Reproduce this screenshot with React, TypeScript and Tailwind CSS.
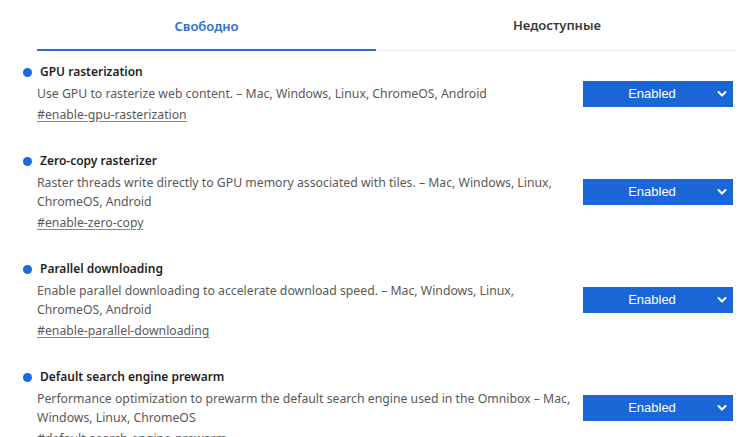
import React from 'react';

const flags = [
  {
    title: 'GPU rasterization',
    description: 'Use GPU to rasterize web content. – Mac, Windows, Linux, ChromeOS, Android',
    link: '#enable-gpu-rasterization',
  },
  {
    title: 'Zero-copy rasterizer',
    description: 'Raster threads write directly to GPU memory associated with tiles. – Mac, Windows, Linux, ChromeOS, Android',
    link: '#enable-zero-copy',
  },
  {
    title: 'Parallel downloading',
    description: 'Enable parallel downloading to accelerate download speed. – Mac, Windows, Linux, ChromeOS, Android',
    link: '#enable-parallel-downloading',
  },
  {
    title: 'Default search engine prewarm',
    description: 'Performance optimization to prewarm the default search engine used in the Omnibox – Mac, Windows, Linux, ChromeOS',
    link: '#default-search-engine-prewarm',
  },
];

const Chevron = () => (
  <svg width="10" height="7" viewBox="0 0 10 7" className="absolute right-[6px] top-1/2 -translate-y-1/2">
    <path d="M1.5 1.5 L5 5 L8.5 1.5" fill="none" stroke="white" strokeWidth="2" strokeLinecap="round" strokeLinejoin="round" />
  </svg>
);

const App: React.FC = () => {
  return (
    <div className="w-[756px] h-[437px] overflow-hidden bg-white font-['Segoe_UI','Noto_Sans',sans-serif] text-[13px]">
      <div className="flex items-end ml-[37px] w-[699px]">
        <div className="w-[339px] h-[50px] pt-1 flex items-center justify-center border-b-2 border-[#2f6fcb] text-[#2f6fcb] font-semibold">
          Свободно
        </div>
        <div className="w-[2px] h-[51px] border-b border-[#ececec]"></div>
        <div className="flex-1 h-[51px] pt-[2px] flex items-center justify-center border-b border-[#ececec] text-[#3a3a3a] font-semibold">
          Недоступные
        </div>
      </div>

      <div className="mt-[11px] flex flex-col gap-[26px]">
        {flags.map((flag, index) => (
          <div key={index} className="pl-[23px] pr-[23px]">
            <div className="flex items-center h-5 text-[#1f1f1f] font-semibold text-[12px]">
              <span className="w-[9px] h-[9px] rounded-full bg-[#1a6be0] mr-2"></span>
              {flag.title}
            </div>
            <div className="flex items-center mt-[2px] pl-[14px]">
              <p className="w-[538px] leading-[19px] text-[12.25px] text-[#595959]">{flag.description}</p>
              <div className="ml-auto relative -my-1 w-[150px] h-[26px] bg-[#1b66d6] text-white font-['Liberation_Sans',Arial,sans-serif] text-[13px] flex items-center justify-center pr-3">
                Enabled
                <Chevron />
              </div>
            </div>
            <div className="mt-[2px] pl-[14px] h-5 leading-5 text-[12.25px]">
              <a href={flag.link} className="text-[#595959] underline underline-offset-2 decoration-[#8a8a8a]">
                {flag.link}
              </a>
            </div>
          </div>
        ))}
      </div>
    </div>
  );
};

export default App;
